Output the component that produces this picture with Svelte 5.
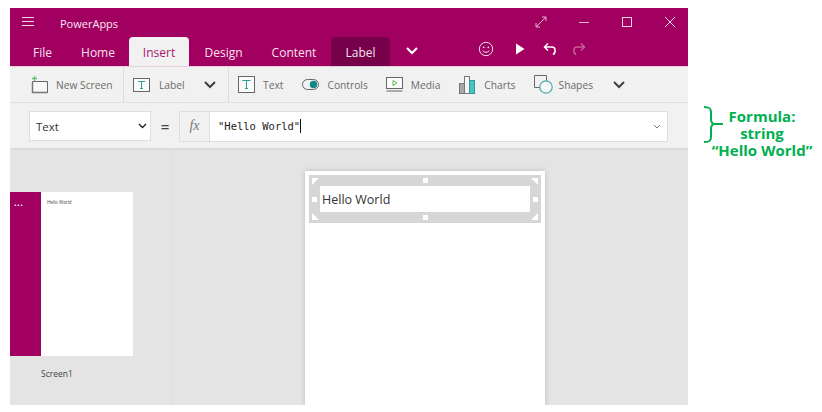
<script>
	const tabs = [
		{ name: 'File', w: 23 },
		{ name: 'Home', w: 30 },
		{ name: 'Insert', w: 60, active: true },
		{ name: 'Design', w: 37 },
		{ name: 'Content', w: 44 },
		{ name: 'Label', w: 59, context: true }
	];
	const handles = [
		{ x: 114, y: 3 },
		{ x: 114, y: 40 },
		{ x: 3, y: 22 },
		{ x: 224, y: 22 }
	];
</script>

<div class="page">
	<div class="app">
		<header class="titlebar">
			<div class="title-row">
				<svg class="burger" width="12" height="10" viewBox="0 0 12 10"><path d="M0 .5h12M0 4.5h12M0 8.5h12" stroke="#f3d9e6" fill="none" /></svg>
				<span class="app-name">PowerApps</span>
				<div class="win-btns">
					<svg width="12" height="12" viewBox="0 0 12 12"><path d="M1 11L11 1M7 1h4v4M1 7v4h4" stroke="#e3b3cd" fill="none" /></svg>
					<svg width="12" height="12" viewBox="0 0 12 12"><path d="M1 6.5h10" stroke="#e3b3cd" fill="none" /></svg>
					<svg width="12" height="12" viewBox="0 0 12 12"><rect x="1.5" y="1.5" width="9" height="9" stroke="#f3d9e6" fill="none" /></svg>
					<svg width="12" height="12" viewBox="0 0 12 12"><path d="M1 1l10 10M11 1L1 11" stroke="#f3d9e6" fill="none" /></svg>
				</div>
			</div>
			<div class="tab-row">
				{#each tabs as tab}
					<span class="tab" class:active={tab.active} class:context={tab.context} style:width="{tab.w}px">{tab.name}</span>
				{/each}
				<svg class="tab-chev" width="14" height="9" viewBox="0 0 14 9"><path d="M2 2l5 5 5-5" stroke="#fff" stroke-width="2.2" fill="none" /></svg>
				<div class="quick">
					<svg width="16" height="16" viewBox="0 0 16 16"><circle cx="8" cy="8" r="6.7" stroke="#f6e3ee" fill="none" /><circle cx="5.7" cy="6.3" r=".9" fill="#f6e3ee" /><circle cx="10.3" cy="6.3" r=".9" fill="#f6e3ee" /><path d="M4.8 9.8c1.6 2 4.8 2 6.4 0" stroke="#f6e3ee" fill="none" /></svg>
					<svg width="10" height="12" viewBox="0 0 10 12"><path d="M1 .5l8.5 5.5L1 11.5z" fill="#fff" /></svg>
					<svg width="14" height="14" viewBox="0 0 14 14"><path d="M5 1.5L1.5 5 5 8.5M1.5 5H9c4 0 4 6 1 7.5" stroke="#fff" stroke-width="1.5" fill="none" /></svg>
					<svg width="14" height="14" viewBox="0 0 14 14"><path d="M9 1.5L12.5 5 9 8.5M12.5 5H5c-4 0-4 6-1 7.5" stroke="#c45f95" stroke-width="1.5" fill="none" /></svg>
				</div>
			</div>
		</header>

		<nav class="ribbon">
			<div class="group g1">
				<svg class="ic" width="18" height="18" viewBox="0 0 18 18"><path d="M1.5 5.5h15v11h-15z" fill="#f7f7f7" stroke="#666" /><path d="M1.5 6.5v10h15" stroke="#777" stroke-width="1.5" fill="none" /><path d="M3.5 0v5M1 2.5h5" stroke="#6cc070" stroke-width="1.3" fill="none" /></svg>
				<span class="r-label">New Screen</span>
			</div>
			<div class="group g2">
				<svg class="ic" width="17" height="14" viewBox="0 0 17 14"><rect x=".5" y=".5" width="16" height="13" fill="#fbfbfb" stroke="#666" /><path d="M5 3.5h7M8.500 3.500v7M7 10.500h3" stroke="#2a9d96" fill="none" /></svg>
				<span class="r-label">Label</span>
				<svg class="chev" width="14" height="9" viewBox="0 0 14 9"><path d="M2 2l5 5 5-5" stroke="#404040" stroke-width="2" fill="none" /></svg>
			</div>
			<div class="group g3">
				<span class="item i-text">
					<svg width="17" height="17" viewBox="0 0 17 17"><rect x=".5" y=".5" width="16" height="16" fill="#fbfbfb" stroke="#666" /><path d="M4.5 4.5h8M8.5 4.5v8M7 12.5h3" stroke="#2a9d96" fill="none" /></svg>
					<span class="r-label">Text</span>
				</span>
				<span class="item i-controls">
					<svg width="17" height="11" viewBox="0 0 17 11"><rect x=".5" y=".5" width="16" height="10" rx="5" fill="none" stroke="#666" /><circle cx="11.5" cy="5.5" r="3.7" fill="#0d8a83" /></svg>
					<span class="r-label">Controls</span>
				</span>
				<span class="item i-media">
					<svg width="17" height="15" viewBox="0 0 17 15"><rect x=".5" y=".5" width="16" height="11" fill="#fbfbfb" stroke="#666" /><path d="M.5 14h16" stroke="#666" fill="none" /><path d="M7 3.5l4 2.5-4 2.5z" fill="none" stroke="#5cb85c" /></svg>
					<span class="r-label">Media</span>
				</span>
				<span class="item i-charts">
					<svg width="16" height="18" viewBox="0 0 16 18"><rect x=".5" y="7.5" width="5" height="10" fill="#a8a8a8" stroke="#777" /><rect x="5.5" y=".5" width="5" height="17" fill="#f5f5f5" stroke="#777" /><rect x="10.5" y="4.5" width="5" height="13" fill="#4cc3bc" stroke="#2a9d96" /></svg>
					<span class="r-label">Charts</span>
				</span>
				<span class="item i-shapes">
					<svg width="19" height="19" viewBox="0 0 19 19"><path d="M7 12.5H.5V.5h12V7" fill="none" stroke="#666" /><circle cx="12" cy="12" r="6.2" fill="#f7f7f7" stroke="#4aa9a4" stroke-width="1.2" /></svg>
					<span class="r-label">Shapes</span>
				</span>
				<svg class="chev last" width="14" height="9" viewBox="0 0 14 9"><path d="M2 2l5 5 5-5" stroke="#404040" stroke-width="2" fill="none" /></svg>
			</div>
		</nav>

		<div class="formula-bar">
			<div class="prop">
				<span>Text</span>
				<svg width="9" height="6" viewBox="0 0 9 6"><path d="M1 1l3.5 3.5L8 1" stroke="#222" stroke-width="1.4" fill="none" /></svg>
			</div>
			<span class="eq">=</span>
			<div class="formula">
				<span class="fx">fx</span>
				<div class="expr"><span>"Hello World"</span><i class="caret"></i></div>
				<svg class="f-chev" width="8" height="5" viewBox="0 0 8 5"><path d="M1 1l3 3 3-3" stroke="#777" fill="none" /></svg>
			</div>
		</div>

		<main class="workspace">
			<aside class="sidebar">
				<div class="thumb">
					<div class="thumb-bar">...</div>
					<div class="thumb-body">Hello World</div>
				</div>
				<div class="thumb-name">Screen1</div>
			</aside>
			<section class="canvas">
				<div class="screen">
					<div class="selection">
						<div class="label-box">Hello World</div>
						{#each handles as h}
							<i class="handle" style:left="{h.x}px" style:top="{h.y}px"></i>
						{/each}
						<i class="corner tl"></i>
						<i class="corner tr"></i>
						<i class="corner bl"></i>
						<i class="corner br"></i>
					</div>
				</div>
			</section>
		</main>
	</div>

	<div class="note">
		<svg class="brace" width="22" height="37" viewBox="0 0 22 37"><path d="M1 1c5 0 7 1 7 5v7c0 3 1 5 4 5h8M12 18c-3 0-4 2-4 5v8c0 4-2 5-7 5" stroke="#00b050" stroke-width="2" fill="none" /></svg>
		<div class="note-text">Formula:<br />string<br />“Hello World”</div>
	</div>
</div>

<style>
	:global(body) {
		background: #fff;
	}

	.page {
		display: flex;
		width: 822px;
		height: 412px;
		padding: 8px 0 0 10px;
		box-sizing: border-box;
		overflow: hidden;
		font-family: "Open Sans", sans-serif;
	}

	.app {
		width: 678px;
		height: 397px;
		flex: none;
		display: flex;
		flex-direction: column;
		background: #e4e4e4;
	}

	.titlebar {
		height: 59px;
		box-sizing: border-box;
		background: #a10060;
		color: #fff;
		flex: none;
		border-bottom: 1px solid #e7cfdc;
	}

	.title-row {
		height: 29px;
		display: flex;
		align-items: center;
	}

	.burger {
		margin-left: 12px;
		margin-top: -2px;
	}

	.app-name {
		margin-left: 26px;
		font-size: 11px;
		color: #f8e8f1;
		padding-top: 2px;
	}

	.win-btns {
		margin-left: auto;
		display: flex;
		gap: 31px;
		margin-right: 12px;
		margin-top: -2px;
	}

	.tab-row {
		height: 29px;
		display: flex;
		align-items: stretch;
		padding-left: 21px;
	}

	.tab {
		display: flex;
		align-items: center;
		justify-content: center;
		font-size: 12px;
		color: #f6e3ee;
		white-space: nowrap;
		margin-right: 30px;
		padding-top: 1px;
		box-sizing: border-box;
	}

	.tab:nth-child(1) {
		margin-right: 29px;
	}

	.tab:nth-child(2), .tab:nth-child(3) {
		margin-right: 16px;
	}

	.tab:nth-child(5) {
		margin-right: 15px;
	}

	.tab.active {
		background: #f1f1f1;
		color: #a8176c;
		border-radius: 4px 4px 0 0;
	}

	.tab.context {
		background: #77004a;
		border-radius: 4px 4px 0 0;
		margin-right: 15px;
	}

	.tab-chev {
		align-self: center;
		margin-top: -3px;
	}

	.quick {
		display: flex;
		align-items: center;
		margin-left: 59px;
		margin-top: -5px;
	}

	.quick svg:nth-child(2) {
		margin-left: 21px;
	}

	.quick svg:nth-child(3) {
		margin-left: 18px;
	}

	.quick svg:nth-child(4) {
		margin-left: 15px;
	}

	.ribbon {
		height: 36px;
		flex: none;
		display: flex;
		background: #f1f1f1;
		border-bottom: 1px solid #e0e0e0;
		color: #666;
		box-sizing: border-box;
	}

	.group {
		display: flex;
		align-items: center;
		box-sizing: border-box;
		border-right: 1px solid #dcdcdc;
	}

	.g1 {
		width: 114px;
		padding-left: 21px;
		gap: 7px;
	}

	.g2 {
		width: 105px;
		padding-left: 9px;
		gap: 9px;
	}

	.g3 {
		flex: 1;
		border-right: 0;
		padding-left: 9px;
	}

	.ic {
		flex: none;
	}

	.r-label {
		font-size: 10.25px;
		color: #6b6b6b;
		white-space: nowrap;
	}

	.chev {
		margin-left: 9px;
	}

	.chev.last {
		margin-left: 19px;
	}

	.item {
		display: flex;
		align-items: center;
		gap: 8px;
	}

	.i-controls {
		margin-left: 19px;
	}

	.i-media, .i-shapes {
		margin-left: 18px;
	}

	.i-charts {
		margin-left: 19px;
		gap: 9px;
	}

	.i-shapes {
		gap: 6px;
	}

	.formula-bar {
		height: 47px;
		flex: none;
		display: flex;
		align-items: center;
		padding: 1px 20px 0 19px;
		background: #f1f1f1;
		border-bottom: 2px solid #dadada;
		box-sizing: border-box;
	}

	.prop {
		width: 122px;
		height: 30px;
		box-sizing: border-box;
		border: 1px solid #dedede;
		background: #fff;
		display: flex;
		align-items: center;
		justify-content: space-between;
		padding: 0 3px 0 6px;
		font-size: 11.5px;
		color: #333;
		flex: none;
	}

	.eq {
		width: 28px;
		flex: none;
		text-align: center;
		font-size: 15px;
		font-weight: 600;
		color: #444;
	}

	.formula {
		flex: 1;
		height: 31px;
		display: flex;
		align-items: center;
		border: 1px solid #dedede;
		background: #fff;
		box-sizing: border-box;
	}

	.fx {
		width: 30px;
		height: 100%;
		display: flex;
		align-items: center;
		justify-content: center;
		background: #f1f1f1;
		border-right: 1px solid #dedede;
		font-family: "Liberation Serif", serif;
		font-style: italic;
		font-size: 14px;
		color: #777;
		flex: none;
		box-sizing: border-box;
	}

	.expr {
		flex: 1;
		display: flex;
		align-items: center;
		padding-left: 8px;
		font-family: "DejaVu Sans Mono", monospace;
		font-size: 10.5px;
		color: #222;
	}

	.caret {
		width: 1px;
		height: 14px;
		background: #111;
	}

	.f-chev {
		margin-right: 6px;
	}

	.workspace {
		flex: 1;
		min-height: 0;
		display: flex;
	}

	.sidebar {
		width: 162px;
		flex: none;
		border-right: 1px solid #dcdcdc;
		box-sizing: border-box;
		padding-top: 42px;
	}

	.thumb {
		width: 123px;
		height: 164px;
		display: flex;
		background: #fff;
	}

	.thumb-bar {
		width: 31px;
		background: #a10060;
		color: #fff;
		font-size: 9px;
		font-weight: 700;
		line-height: 10px;
		letter-spacing: .5px;
		padding: 6px 0 0 4px;
		box-sizing: border-box;
	}

	.thumb-body {
		flex: 1;
		padding: 7px 0 0 6px;
		font-size: 4.5px;
		color: #444;
		white-space: nowrap;
	}

	.thumb-name {
		margin: 12px 0 0 31px;
		font-size: 8.5px;
		color: #444;
	}

	.canvas {
		flex: 1;
		min-width: 0;
		padding: 21px 0 0 133px;
		overflow: hidden;
	}

	.screen {
		width: 240px;
		height: 240px;
		padding: 4px;
		box-sizing: border-box;
		background: #fff;
		box-shadow: 0 0 5px rgba(0, 0, 0, 0.18);
	}

	.selection {
		position: relative;
		height: 48px;
		padding: 11px;
		box-sizing: border-box;
		background: #d6d6d6;
	}

	.label-box {
		height: 26px;
		display: flex;
		align-items: center;
		padding-left: 2px;
		background: #fff;
		font-size: 12.5px;
		color: #333;
	}

	.handle {
		position: absolute;
		width: 5px;
		height: 5px;
		background: #fff;
	}

	.corner {
		position: absolute;
		width: 0;
		height: 0;
		border-style: solid;
	}

	.corner.tl {
		left: 3px;
		top: 3px;
		border-width: 7px 7px 0 0;
		border-color: #fff transparent transparent transparent;
	}

	.corner.tr {
		right: 3px;
		top: 3px;
		border-width: 0 7px 7px 0;
		border-color: transparent #fff transparent transparent;
	}

	.corner.bl {
		left: 3px;
		bottom: 3px;
		border-width: 7px 0 0 7px;
		border-color: transparent transparent transparent #fff;
	}

	.corner.br {
		right: 3px;
		bottom: 3px;
		border-width: 0 0 7px 7px;
		border-color: transparent transparent #fff transparent;
	}

	.note {
		position: relative;
		width: 134px;
		height: 60px;
		margin-top: 97px;
		flex: none;
		color: #00b050;
	}

	.brace {
		position: absolute;
		left: 15px;
		top: 1px;
	}

	.note-text {
		text-align: center;
		font-family: "Open Sans", sans-serif;
		font-weight: 700;
		font-size: 15px;
		line-height: 17px;
		white-space: nowrap;
		margin-left: 11px;
		width: 126px;
		padding-top: 3px;
	}
</style>
